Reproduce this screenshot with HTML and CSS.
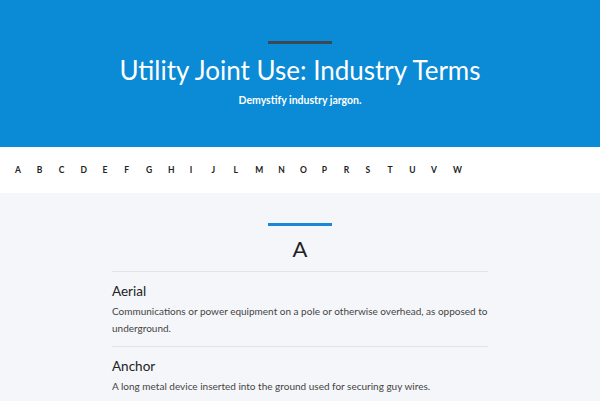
FILE: index.html
```html
<!DOCTYPE html>
<html lang="en">
<head>
    <meta charset="UTF-8">
    <meta name="viewport" content="width=device-width, initial-scale=1.0">
    <title>Utility Joint Use: Industry Terms</title>
    <link rel="stylesheet" href="styles.css">
</head>
<body>
    <header class="hero">
        <div class="hero-rule"></div>
        <h1>Utility Joint Use: Industry Terms</h1>
        <p class="tagline">Demystify industry jargon.</p>
    </header>

    <nav class="letters">
        <a href="#a">A</a>
        <a href="#b">B</a>
        <a href="#c">C</a>
        <a href="#d">D</a>
        <a href="#e">E</a>
        <a href="#f">F</a>
        <a href="#g">G</a>
        <a href="#h">H</a>
        <a href="#i">I</a>
        <a href="#j">J</a>
        <a href="#l">L</a>
        <a href="#m">M</a>
        <a href="#n">N</a>
        <a href="#o">O</a>
        <a href="#p">P</a>
        <a href="#r">R</a>
        <a href="#s">S</a>
        <a href="#t">T</a>
        <a href="#u">U</a>
        <a href="#v">V</a>
        <a href="#w">W</a>
    </nav>

    <main class="glossary">
        <section class="letter-group" id="a">
            <div class="group-rule"></div>
            <h2>A</h2>
            <div class="term">
                <h3>Aerial</h3>
                <p>Communications or power equipment on a pole or otherwise overhead, as opposed to underground.</p>
            </div>
            <div class="term">
                <h3>Anchor</h3>
                <p>A long metal device inserted into the ground used for securing guy wires.</p>
            </div>
        </section>
    </main>
</body>
</html>
```

FILE: styles.css
```css
body {
    margin: 0;
    font-family: Lato, "Open Sans", sans-serif;
    background-color: #f5f6f9;
    color: #222;
}

.hero {
    background-color: #0b8ad5;
    color: #fff;
    text-align: center;
    padding: 41px 20px 0;
    height: 106px;
}

.hero-rule {
    width: 64px;
    height: 3px;
    margin: 0 auto;
    background-color: #3b4856;
}

.hero h1 {
    margin: 10px 0 0;
    font-size: 26px;
    font-weight: 400;
    line-height: 32px;
}

.tagline {
    margin: 8px 0 0;
    font-size: 10.5px;
    font-weight: 700;
    line-height: 13px;
}

.letters {
    display: flex;
    gap: 14.85px;
    height: 46px;
    align-items: center;
    padding: 0 15px;
    background-color: #fff;
}

.letters a {
    color: #222;
    text-decoration: none;
    font-size: 8.5px;
    font-weight: 700;
    min-width: 7px;
}

.glossary {
    max-width: 376px;
    margin: 0 auto;
    padding-top: 30px;
}

.group-rule {
    width: 64px;
    height: 3px;
    margin: 0 auto;
    background-color: #1c86d8;
}

.letter-group h2 {
    margin: 8px 0 0;
    text-align: center;
    font-size: 22px;
    font-weight: 400;
    line-height: 30px;
    padding-bottom: 7px;
    border-bottom: 1px solid #e2e4e8;
}

.term {
    padding: 9px 0 9px;
    border-bottom: 1px solid #e2e4e8;
}

.term h3 {
    margin: 0;
    font-size: 13.5px;
    font-weight: 400;
    line-height: 20px;
}

.term p {
    margin: 2px 0 0;
    font-size: 10px;
    line-height: 17px;
    color: #444;
}
```
